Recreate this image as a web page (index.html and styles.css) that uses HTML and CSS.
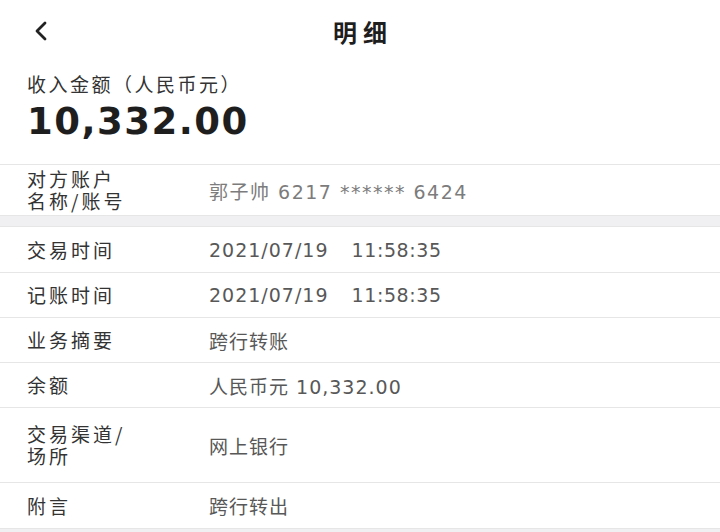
FILE: index.html
```html
<!DOCTYPE html>
<html lang="zh-CN">

<head>
  <meta charset="UTF-8">
  <meta name="viewport" content="width=device-width, initial-scale=1.0">
  <title>明细</title>
  <link rel="stylesheet" href="styles.css">
</head>

<body>
  <div class="header">
    <span class="back">
      <svg width="18" height="22" viewBox="0 0 18 22">
        <polyline points="13,3 5,11 13,19" fill="none" stroke="#222" stroke-width="2.8" stroke-linecap="round" stroke-linejoin="round" />
      </svg>
    </span>
    <h1 class="title">明细</h1>
    <span></span>
  </div>

  <div class="summary">
    <p class="sum-label">收入金额（人民币元）</p>
    <p class="sum-amount">10,332.00</p>
  </div>

  <ul class="list">
    <li class="row tall">
      <span class="label">对方账户<br>名称/账号</span>
      <span class="value">郭子帅 6217 ****** 6424</span>
    </li>
  </ul>

  <div class="gap"></div>

  <ul class="list">
    <li class="row first">
      <span class="label">交易时间</span>
      <span class="value">2021/07/19<span class="time">11:58:35</span></span>
    </li>
    <li class="row">
      <span class="label">记账时间</span>
      <span class="value">2021/07/19<span class="time">11:58:35</span></span>
    </li>
    <li class="row">
      <span class="label">业务摘要</span>
      <span class="value">跨行转账</span>
    </li>
    <li class="row">
      <span class="label">余额</span>
      <span class="value">人民币元 10,332.00</span>
    </li>
    <li class="row tall2">
      <span class="label">交易渠道/<br>场所</span>
      <span class="value">网上银行</span>
    </li>
    <li class="row">
      <span class="label">附言</span>
      <span class="value">跨行转出</span>
    </li>
  </ul>

  <div class="gap bottom"></div>
</body>

</html>
```

FILE: styles.css
```css
* {
  margin: 0;
  padding: 0;
  list-style: none;
  box-sizing: border-box;
}

body {
  width: 720px;
  height: 532px;
  overflow: hidden;
  background: #fff;
  font-family: "DejaVu Sans", "Noto Sans CJK SC", sans-serif;
  color: #2b2b2b;
}

.header {
  height: 62px;
  display: grid;
  grid-template-columns: 1fr auto 1fr;
  align-items: center;
}

.back {
  display: flex;
  align-items: center;
  padding-left: 32px;
}

.title {
  font-family: "Noto Sans CJK SC", sans-serif;
  font-size: 24px;
  font-weight: bold;
  letter-spacing: 6px;
  margin-right: -6px;
  color: #1e1e1e;
}

.summary {
  padding: 9px 27px 0;
  height: 103px;
  border-bottom: 1px solid #e6e6e6;
}

.sum-label {
  font-family: "Noto Sans CJK SC", sans-serif;
  font-size: 19px;
  line-height: 26px;
  letter-spacing: 2.5px;
  color: #333;
}

.sum-amount {
  font-size: 37px;
  font-weight: bold;
  line-height: 50px;
  letter-spacing: 1.5px;
  color: #1e1e1e;
}

.row {
  display: flex;
  align-items: center;
  height: 45px;
  padding-left: 27px;
  border-bottom: 1px solid #e6e6e6;
}

.list .row:last-child {
  border-bottom: none;
}

.row.first {
  height: 46px;
}

.row.tall {
  height: 50px;
}

.row.tall2 {
  height: 75px;
}

.label {
  width: 182px;
  flex-shrink: 0;
  font-family: "Noto Sans CJK SC", sans-serif;
  font-size: 19px;
  line-height: 22px;
  letter-spacing: 3px;
  color: #333;
}

.value {
  font-size: 19px;
  letter-spacing: 1px;
  color: #585858;
}

.tall .value {
  color: #7c7c7c;
  letter-spacing: 1.5px;
}

.time {
  margin-left: 23px;
  letter-spacing: 0.6px;
}

.gap {
  height: 12px;
  background: #f0f0f2;
  border-top: 1px solid #e6e6e6;
  border-bottom: 1px solid #e6e6e6;
}

.gap.bottom {
  height: 20px;
  border-bottom: none;
}
```
